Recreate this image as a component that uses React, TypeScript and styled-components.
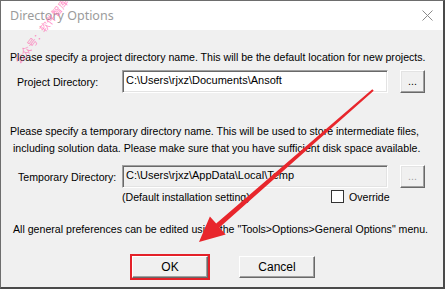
import React from "react";
import styled, { createGlobalStyle } from "styled-components";

const Global = createGlobalStyle`
  html, body { margin: 0; padding: 0; background: #ffffff; }
  * { box-sizing: border-box; }
`;

const Window = styled.div`
  position: relative;
  width: 445px;
  height: 289px;
  display: flex;
  flex-direction: column;
  border: 1px solid #6d6d6d;
  border-right: 2px solid #4a4a4a;
  border-bottom: 2px solid #4a4a4a;
  font-family: "Liberation Sans", Arial, sans-serif;
  font-size: 10.6px;
  color: #000;
  overflow: hidden;
`;

const TitleBar = styled.div`
  height: 29px;
  flex: none;
  background: #ffffff;
  display: flex;
  align-items: center;
  justify-content: space-between;
  padding: 0 10px 0 9px;
`;

const Title = styled.span`
  font-family: "Noto Sans", "Open Sans", sans-serif;
  font-size: 12.5px;
  color: #9b9b9b;
`;

const Body = styled.div`
  flex: 1;
  background: #f0f0f0;
  display: flex;
  flex-direction: column;
  padding: 21px 0 0 9px;
`;

const Para = styled.div<{ $indent?: number; $mt?: number }>`
  line-height: 13px;
  white-space: nowrap;
  padding-left: ${(p) => p.$indent ?? 0}px;
  margin-top: ${(p) => p.$mt ?? 0}px;
`;

const TwoLines = styled.div<{ $mt?: number }>`
  margin-top: ${(p) => p.$mt ?? 0}px;
  display: flex;
  flex-direction: column;
  gap: 4px;
`;

const FieldRow = styled.div<{ $mt?: number }>`
  display: flex;
  align-items: center;
  margin-top: ${(p) => p.$mt ?? 0}px;
`;

const Label = styled.span<{ $indent: number }>`
  width: 112px;
  padding-left: ${(p) => p.$indent}px;
  white-space: nowrap;
`;

const Field = styled.div<{ $disabled?: boolean }>`
  width: 266px;
  height: 23px;
  background: ${(p) => (p.$disabled ? "#f0f0f0" : "#ffffff")};
  border-top: 1px solid #a0a0a0;
  border-left: 1px solid #a0a0a0;
  border-bottom: 1px solid #ffffff;
  border-right: 1px solid #ffffff;
  box-shadow: inset 1px 1px 0 #696969, inset -1px -1px 0 #e3e3e3;
  padding: 3px 0 0 3px;
  font-size: 11px;
  white-space: nowrap;
`;

const BrowseButton = styled.div<{ $disabled?: boolean }>`
  margin-left: 12px;
  width: 25px;
  height: 23px;
  background: #f0f0f0;
  border-top: 1px solid #ffffff;
  border-left: 1px solid #ffffff;
  border-right: 1px solid #696969;
  border-bottom: 1px solid #696969;
  box-shadow: inset -1px -1px 0 #a0a0a0, inset 1px 1px 0 #e3e3e3;
  display: flex;
  align-items: center;
  justify-content: center;
  padding-bottom: 2px;
  color: ${(p) => (p.$disabled ? "#a0a0a0" : "#000")};
`;

const SubRow = styled.div`
  display: flex;
  align-items: center;
  margin-top: 2px;
  padding-left: 112px;
`;

const Hint = styled.span`
  width: 209px;
  white-space: nowrap;
`;

const Check = styled.span`
  width: 13px;
  height: 13px;
  background: #fff;
  border: 1px solid #333;
  margin-right: 5px;
`;

const ButtonRow = styled.div`
  display: flex;
  gap: 31px;
  margin-top: 20px;
  padding-left: 122px;
`;

const PushButton = styled.div<{ $marked?: boolean }>`
  width: 76px;
  height: 22px;
  background: #f0f0f0;
  border-top: 1px solid #ffffff;
  border-left: 1px solid #ffffff;
  border-right: 1px solid #696969;
  border-bottom: 1px solid #696969;
  box-shadow: inset -1px -1px 0 #a0a0a0;
  display: flex;
  align-items: center;
  justify-content: center;
  font-size: 12px;
  outline: ${(p) => (p.$marked ? "2px solid #e42129" : "none")};
  outline-offset: 0px;
`;

const Overlay = styled.svg`
  position: absolute;
  left: -1px;
  top: -1px;
  width: 445px;
  height: 289px;
  pointer-events: none;
`;

const Watermark = styled.span`
  position: absolute;
  left: 0px;
  top: 22px;
  transform: rotate(-52deg);
  font-family: "Noto Sans CJK SC", sans-serif;
  font-size: 10px;
  color: rgba(255, 90, 170, 0.7);
  white-space: nowrap;
`;

export default function App() {
  return (
    <>
      <Global />
      <Window>
        <TitleBar>
          <Title>Directory Options</Title>
          <svg width="11" height="11" viewBox="0 0 11 11">
            <path d="M0.5 0.5 L10.5 10.5 M10.5 0.5 L0.5 10.5" stroke="#8a8a8a" strokeWidth="1" />
          </svg>
        </TitleBar>
        <Body>
          <Para>
            Please specify a project directory name. This will be the default location for new projects.
          </Para>
          <FieldRow $mt={6}>
            <Label $indent={7}>Project Directory:</Label>
            <Field>C:\Users\rjxz\Documents\Ansoft</Field>
            <BrowseButton>...</BrowseButton>
          </FieldRow>
          <TwoLines $mt={32}>
            <Para>Please specify a temporary directory name. This will be used to store intermediate files,</Para>
            <Para $indent={3}>
              including solution data. Please make sure that you have sufficient disk space available.
            </Para>
          </TwoLines>
          <FieldRow $mt={10}>
            <Label $indent={8}>Temporary Directory:</Label>
            <Field $disabled>C:\Users\rjxz\AppData\Local\Temp</Field>
            <BrowseButton $disabled>...</BrowseButton>
          </FieldRow>
          <SubRow>
            <Hint>(Default installation setting)</Hint>
            <Check />
            <span>Override</span>
          </SubRow>
          <Para $indent={3} $mt={20}>
            All general preferences can be edited using the "Tools&gt;Options&gt;General Options" menu.
          </Para>
          <ButtonRow>
            <PushButton $marked>OK</PushButton>
            <PushButton>Cancel</PushButton>
          </ButtonRow>
        </Body>
        <Watermark>公众号：软件智库</Watermark>
        <Overlay viewBox="0 0 445 289">
          <polygon
            points="372.3,89.2 373.7,90.8 219.4,227.4 225.7,234.5 199,242 209.9,216.5 216.2,223.6"
            fill="#e8262c"
          />
        </Overlay>
      </Window>
    </>
  );
}
